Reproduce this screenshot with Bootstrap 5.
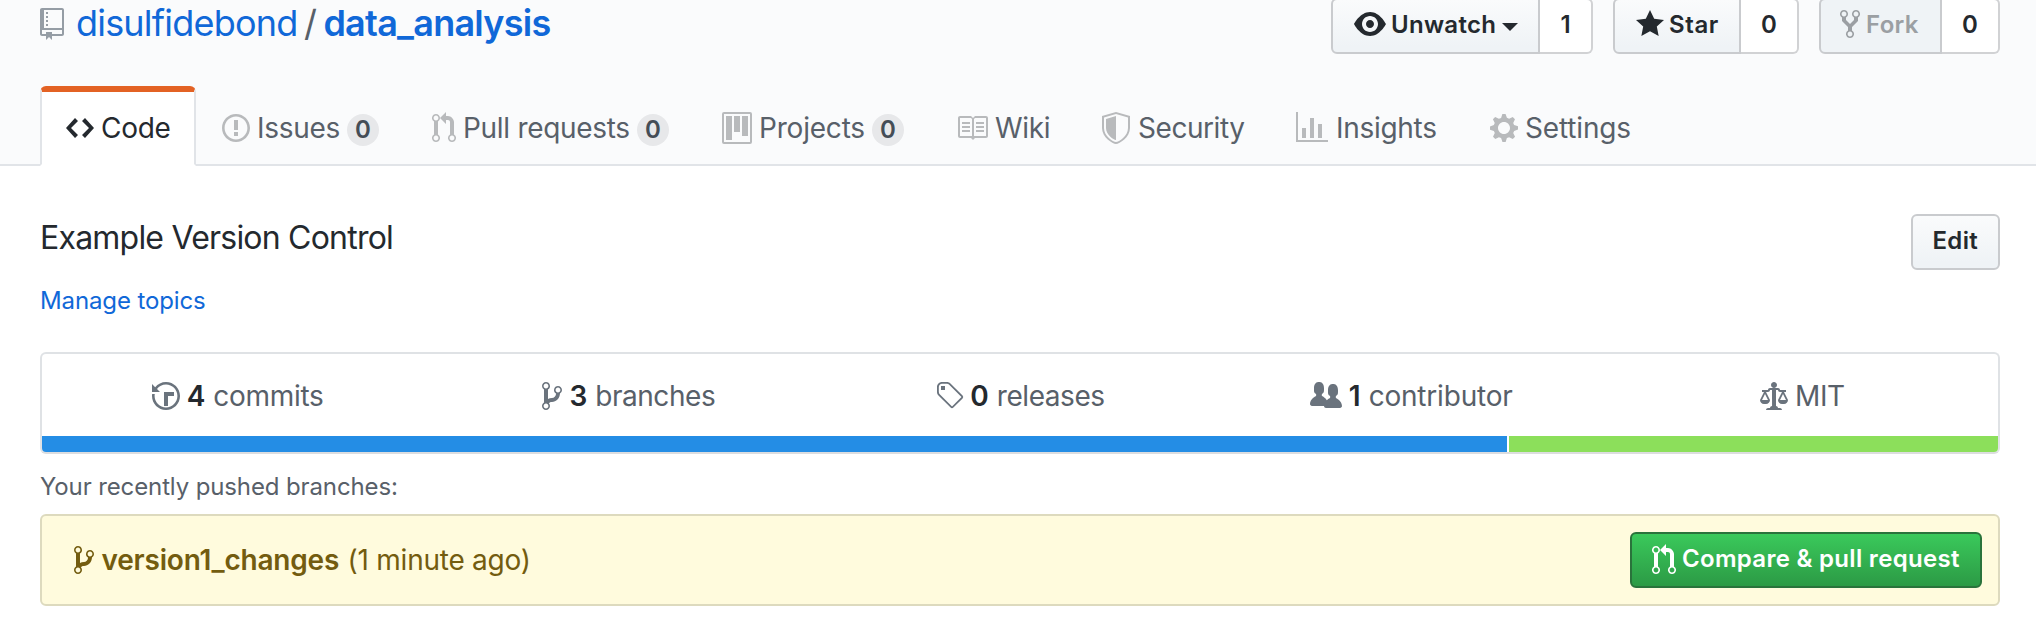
<!DOCTYPE html>
<html lang="en">
<head>
<meta charset="utf-8">
<meta name="viewport" content="width=device-width, initial-scale=1">
<title>disulfidebond/data_analysis</title>
<link href="https://cdn.jsdelivr.net/npm/bootstrap@5.3.0/dist/css/bootstrap.min.css" rel="stylesheet">
<style>
body{font-family:Inter,"Liberation Sans",sans-serif;font-size:28px;line-height:42px;color:#24292e;background:#fff}
a{text-decoration:none;color:#1068d8}
svg{fill:currentColor;height:32px;flex:none;display:block}
.b6{font-weight:600}
.fs24{font-size:24px;line-height:36px;letter-spacing:-.12px}
.gutter{padding-left:40px;padding-right:36px}
.repo-head{background:#fafbfc;height:166px;border-bottom:2px solid #e1e4e8}
.repo-title{font-size:36px;line-height:54px;height:54px;color:#586069;margin-top:-4px;gap:6.5px}
.repo-title svg{color:#959da5;margin:2px 5.5px 0 0}
.actions{gap:20px;margin-top:-2px}
.gh-btn{height:56px;font-size:24px;line-height:40px;font-weight:600;color:#24292e;border:2px solid #c9cbce;border-radius:6px;background:#eff3f6 linear-gradient(180deg,#fafbfc,#eff3f6 90%);padding:0 20px 2px;display:flex;align-items:center;gap:5px;white-space:nowrap}
.gh-btn svg{margin-bottom:2px}
.social .gh-btn{border-radius:6px 0 0 6px;padding-left:21px}
.social .gh-btn.off{background:#eff3f6;color:#9b9fa3;padding-left:19px;gap:6px}
.tally{height:56px;width:58px;border:2px solid #d1d2d4;border-left:0;border-radius:0 6px 6px 0;background:#fff;color:#24292e;font-size:24px;font-weight:600;line-height:50px;text-align:center}
.caret{border:8px solid transparent;border-top-color:currentColor;border-bottom:0;margin:3px 0 0 1px}
.w-watch{width:209px}.w-star{width:128px}.w-fork{width:123px}
.repo-tabs{height:80px;margin-bottom:-2px}
.repo-tab{height:80px;border:2px solid transparent;border-top-width:6px;padding:0 0 0 24px;color:#586069;display:flex;align-items:center;gap:7px;white-space:nowrap;letter-spacing:-.15px}
.repo-tab svg{color:#b8babc}
.repo-tab.on{background:#fff;color:#24292e;border-color:#e36224 #e1e4e8 transparent;border-radius:6px 6px 0 0}
.repo-tab.on svg{color:#24292e}
.pill{width:32px;height:32px;border-radius:16px;background:#e7e8ea;color:#444d56;font-size:24px;font-weight:600;line-height:32px;text-align:center;margin-top:4px}
.t-code{width:156px}.t-issues{width:210px}.t-pulls{width:290px}.t-projects{width:234px}.t-wiki{width:146px}.t-security{width:194px;gap:8px}.t-insights{width:194px;gap:8px}
.about{font-size:32px;line-height:48px;letter-spacing:-.78px}
.topics{margin-top:21px;margin-bottom:33px}
.stats{border:2px solid #dfe2e5;border-bottom-color:#dcdddf;border-radius:6px;height:102px;overflow:hidden}
.stats ul{height:82px;padding-top:2px}
.stats li{gap:7px;color:#586069;flex:1 1 0}
.stats b{color:#24292e;margin-right:1px}
.stats svg{color:#6a737d}
.langs{height:16px;gap:2px}
.lang-a{background:#248de5}.lang-b{background:#8cdf5b}
.pushed{margin:15px 0 9px;color:#586069}
.flash{background:#fffbdd;border:2px solid #dddabe;border-radius:6px;height:92px;color:#735c0f;padding:0 16px 0 32px}
.flash .branch{gap:7.5px}
.flash .branch span{letter-spacing:-.25px;margin-left:1px}
.gh-btn.go{color:#fff;border-color:#2a733b;background:linear-gradient(180deg,#3ac95b,#2c9a45);width:352px;gap:6px}
.gh-btn.go svg{margin:1px 0 0}
.ls-u{letter-spacing:.3px}.ls-f{letter-spacing:.6px}.ls-n{letter-spacing:-.3px}.ls-m{letter-spacing:-.2px}.ls-t{letter-spacing:-.45px}
.ls-own{letter-spacing:-.8px}.ls-repo{letter-spacing:-.75px}
</style>
</head>
<body>
<header class="repo-head gutter d-flex flex-column justify-content-between">
  <div class="d-flex justify-content-between align-items-start">
    <h1 class="repo-title d-flex align-items-center mb-0 fw-normal">
      <svg viewBox="0 0 12 16"><path d="M4 9H3V8h1v1zm0-3H3v1h1V6zm0-2H3v1h1V4zm0-2H3v1h1V2zm8-1v12c0 .55-.45 1-1 1H6v2l-1.5-1.5L3 16v-2H1c-.55 0-1-.45-1-1V1c0-.55.45-1 1-1h10c.55 0 1 .45 1 1zm-1 10H1v2h2v-1h3v1h5v-2zm0-10H2v9h9V1z"/></svg>
      <a href="#" class="ls-own">disulfidebond</a><span>/</span><a href="#" class="b6 ls-repo">data_analysis</a>
    </h1>
    <div class="actions d-flex">
      <div class="social d-flex">
        <a href="#" class="gh-btn w-watch"><svg viewBox="0 0 16 16"><path fill-rule="evenodd" d="M8.06 2C3 2 0 8 0 8s3 6 8.06 6C13 14 16 8 16 8s-3-6-7.94-6zM8 12c-2.2 0-4-1.78-4-4 0-2.2 1.8-4 4-4 2.22 0 4 1.8 4 4 0 2.22-1.78 4-4 4zm2-4c0 1.11-.89 2-2 2-1.11 0-2-.89-2-2 0-1.11.89-2 2-2 1.11 0 2 .89 2 2z"/></svg><span class="ls-u">Unwatch</span><i class="caret"></i></a>
        <a href="#" class="tally" style="width:53px">1</a>
      </div>
      <div class="social d-flex">
        <a href="#" class="gh-btn w-star"><svg viewBox="0 0 14 16"><path d="M14 6l-4.9-.64L7 1 4.9 5.36 0 6l3.6 3.26L2.67 14 7 11.67 11.33 14l-.93-4.74L14 6z"/></svg><span class="ls-f">Star</span></a>
        <a href="#" class="tally">0</a>
      </div>
      <div class="social d-flex">
        <span class="gh-btn off w-fork"><svg viewBox="0 0 10 16"><path fill-rule="evenodd" d="M8 1a1.993 1.993 0 0 0-1 3.72V6L5 8 3 6V4.72A1.993 1.993 0 0 0 2 1a1.993 1.993 0 0 0-1 3.72V6.5l3 3v1.78A1.993 1.993 0 0 0 5 15a1.993 1.993 0 0 0 1-3.72V9.5l3-3V4.72A1.993 1.993 0 0 0 8 1zM2 4.2C1.34 4.2.8 3.65.8 3c0-.65.55-1.2 1.2-1.2.65 0 1.2.55 1.2 1.2 0 .65-.55 1.2-1.2 1.2zm3 10c-.66 0-1.2-.55-1.2-1.2 0-.65.55-1.2 1.2-1.2.65 0 1.2.55 1.2 1.2 0 .65-.55 1.2-1.2 1.2zm3-10c-.66 0-1.2-.55-1.2-1.2 0-.65.55-1.2 1.2-1.2.65 0 1.2.55 1.2 1.2 0 .65-.55 1.2-1.2 1.2z"/></svg><span class="ls-u">Fork</span></span>
        <a href="#" class="tally">0</a>
      </div>
    </div>
  </div>
  <nav class="repo-tabs d-flex">
    <a href="#" class="repo-tab on t-code"><svg viewBox="0 0 14 16"><path d="M9.5 3L8 4.5 11.5 8 8 11.5 9.5 13 14 8 9.5 3zm-5 0L0 8l4.5 5L6 11.5 2.5 8 6 4.5 4.5 3z"/></svg><span class="ls-n">Code</span></a>
    <a href="#" class="repo-tab t-issues"><svg viewBox="0 0 14 16"><path fill-rule="evenodd" d="M7 2.3c3.14 0 5.7 2.56 5.7 5.7s-2.56 5.7-5.7 5.7A5.71 5.71 0 0 1 1.3 8c0-3.14 2.56-5.7 5.7-5.7zM7 1C3.14 1 0 4.14 0 8s3.14 7 7 7 7-3.14 7-7-3.14-7-7-7zm1 3H6v5h2V4zm0 6H6v2h2v-2z"/></svg><span class="ls-n">Issues</span><span class="pill">0</span></a>
    <a href="#" class="repo-tab t-pulls"><svg viewBox="0 0 12 16"><path fill-rule="evenodd" d="M11 11.28V5c-.03-.78-.34-1.47-.94-2.06C9.46 2.35 8.78 2.03 8 2H7V0L4 3l3 3V4h1c.27.02.48.11.69.31.21.2.3.42.31.69v6.28A1.993 1.993 0 0 0 10 15a1.993 1.993 0 0 0 1-3.72zm-1 2.92c-.66 0-1.2-.55-1.2-1.2 0-.65.55-1.2 1.2-1.2.65 0 1.2.55 1.2 1.2 0 .65-.55 1.2-1.2 1.2zM4 3c0-1.11-.89-2-2-2a1.993 1.993 0 0 0-1 3.72v6.56A1.993 1.993 0 0 0 2 15a1.993 1.993 0 0 0 1-3.72V4.72c.59-.34 1-.98 1-1.72zm-.8 10c0 .66-.55 1.2-1.2 1.2-.65 0-1.2-.55-1.2-1.2 0-.65.55-1.2 1.2-1.2.65 0 1.2.55 1.2 1.2zM2 4.2C1.34 4.2.8 3.65.8 3c0-.65.55-1.2 1.2-1.2.65 0 1.2.55 1.2 1.2 0 .65-.55 1.2-1.2 1.2z"/></svg><span class="ls-n">Pull requests</span><span class="pill">0</span></a>
    <a href="#" class="repo-tab t-projects"><svg viewBox="0 0 15 16"><path fill-rule="evenodd" d="M10 12h3V2h-3v10zm-4-2h3V2H6v8zm-4 4h3V2H2v12zm-1 1h13V1H1v14zM14 0H1a1 1 0 0 0-1 1v14a1 1 0 0 0 1 1h13a1 1 0 0 0 1-1V1a1 1 0 0 0-1-1z"/></svg><span class="ls-m">Projects</span><span class="pill">0</span></a>
    <a href="#" class="repo-tab t-wiki"><svg viewBox="0 0 16 16"><path fill-rule="evenodd" d="M3 5h4v1H3V5zm0 3h4V7H3v1zm0 2h4V9H3v1zm11-5h-4v1h4V5zm0 2h-4v1h4V7zm0 2h-4v1h4V9zm2-6v9c0 .55-.45 1-1 1H9.5l-1 1-1-1H2c-.55 0-1-.45-1-1V3c0-.55.45-1 1-1h5.5l1 1 1-1H15c.55 0 1 .45 1 1zm-8 .5L7.5 3H2v9h6V3.5zm7-.5H9.5l-.5.5V12h6V3z"/></svg><span class="ls-n">Wiki</span></a>
    <a href="#" class="repo-tab t-security"><svg viewBox="0 0 14 16"><path fill-rule="evenodd" d="M0 2l7-2 7 2v6.02C14 12.69 8.69 16 7 16c-1.69 0-7-3.31-7-7.98V2zm1 .75L7 1l6 1.75v5.268C13 12.104 8.449 15 7 15c-1.449 0-6-2.896-6-6.982V2.75zm1 .75L7 2v12c-1.207 0-5-2.482-5-5.985V3.5z"/></svg><span class="ls-t">Security</span></a>
    <a href="#" class="repo-tab t-insights"><svg viewBox="0 0 16 16"><path d="M16 14v1H0V0h1v14h15zM5 13H3V8h2v5zm4 0H7V3h2v10zm4 0h-2V6h2v7z"/></svg><span class="ls-n">Insights</span></a>
    <a href="#" class="repo-tab"><svg viewBox="0 0 14 16"><path fill-rule="evenodd" d="M14 8.77v-1.6l-1.94-.64-.45-1.09.88-1.84-1.13-1.13-1.81.91-1.09-.45-.69-1.92h-1.6l-.63 1.94-1.11.45-1.84-.88-1.13 1.13.91 1.81-.45 1.09L0 7.23v1.59l1.94.64.45 1.09-.88 1.84 1.13 1.13 1.81-.91 1.09.45.69 1.92h1.59l.63-1.94 1.11-.45 1.84.88 1.13-1.13-.92-1.81.47-1.09L14 8.75v.02zM7 11c-1.66 0-3-1.34-3-3s1.34-3 3-3 3 1.34 3 3-1.34 3-3 3z"/></svg><span>Settings</span></a>
  </nav>
</header>

<main class="gutter pt-5">
  <div class="d-flex justify-content-between align-items-start">
    <div>
      <div class="about">Example Version Control</div>
      <div class="topics fs24"><a href="#">Manage topics</a></div>
    </div>
    <a href="#" class="gh-btn ls-u">Edit</a>
  </div>

  <section class="stats">
    <ul class="list-unstyled d-flex mb-0">
      <li class="d-flex align-items-center justify-content-center"><svg viewBox="0 0 14 16"><path d="M8 13H6V6h5v2H8v5zM7 1C4.81 1 2.87 2.02 1.59 3.59L0 2v4h4L2.5 4.5C3.55 3.17 5.17 2.3 7 2.3c3.14 0 5.7 2.56 5.7 5.7s-2.56 5.7-5.7 5.7A5.71 5.71 0 0 1 1.3 8c0-.34.03-.67.09-1H.08C.03 7.33 0 7.66 0 8c0 3.86 3.14 7 7 7s7-3.14 7-7-3.14-7-7-7z"/></svg><b class="b6">4</b><span class="ls-n">commits</span></li>
      <li class="d-flex align-items-center justify-content-center"><svg viewBox="0 0 10 16"><path id="branch" fill-rule="evenodd" d="M10 5c0-1.11-.89-2-2-2a1.993 1.993 0 0 0-1 3.72v.3c-.02.52-.23.98-.63 1.38-.4.4-.86.61-1.38.63-.83.02-1.48.16-2 .45V4.72a1.993 1.993 0 0 0-1-3.72C.88 1 0 1.89 0 3a2 2 0 0 0 1 1.72v6.56c-.59.35-1 .99-1 1.72 0 1.11.89 2 2 2 1.11 0 2-.89 2-2 0-.53-.2-1-.53-1.36.09-.06.48-.41.59-.47.25-.11.56-.17.94-.17 1.05-.05 1.95-.45 2.75-1.25S8.95 7.77 9 6.73h-.02C9.59 6.37 10 5.73 10 5zM2 1.8c.66 0 1.2.55 1.2 1.2 0 .65-.55 1.2-1.2 1.2C1.35 4.2.8 3.65.8 3c0-.65.55-1.2 1.2-1.2zm0 12.41c-.66 0-1.2-.55-1.2-1.2 0-.65.55-1.2 1.2-1.2.65 0 1.2.55 1.2 1.2 0 .65-.55 1.2-1.2 1.2zm6-8c-.66 0-1.2-.55-1.2-1.2 0-.65.55-1.2 1.2-1.2.65 0 1.2.55 1.2 1.2 0 .65-.55 1.2-1.2 1.2z"/></svg><b class="b6">3</b><span class="ls-t">branches</span></li>
      <li class="d-flex align-items-center justify-content-center"><svg viewBox="0 0 14 16" style="overflow:visible"><path fill-rule="evenodd" d="M7.73 1.73C7.26 1.26 6.62 1 5.96 1H3.5C2.13 1 1 2.13 1 3.5v2.47c0 .66.27 1.3.73 1.77l6.06 6.06c.39.39 1.02.39 1.41 0l4.59-4.59a.996.996 0 0 0 0-1.41L7.73 1.73zM2.38 7.09c-.31-.3-.47-.7-.47-1.13V3.5c0-.88.72-1.59 1.59-1.59h2.47c.42 0 .83.16 1.13.47l6.14 6.13-4.73 4.73-6.13-6.15zM3.01 3h2v2H3V3h.01z"/></svg><b class="b6">0</b><span class="ls-t">releases</span></li>
      <li class="d-flex align-items-center justify-content-center"><svg viewBox="0 0 16 16"><path d="M16 12.999c0 .439-.45 1-1 1H7.995c-.539 0-.994-.447-.995-.999H1c-.54 0-1-.561-1-1 0-2.634 3-4 3-4s.229-.409 0-1c-.841-.621-1.058-.59-1-3 .058-2.419 1.367-3 2.5-3s2.442.58 2.5 3c.058 2.41-.159 2.379-1 3-.229.59 0 1 0 1s1.549.711 2.42 2.088C9.196 9.369 10 8.999 10 8.999s.229-.409 0-1c-.841-.62-1.058-.59-1-3 .058-2.419 1.367-3 2.5-3s2.437.581 2.495 3c.059 2.41-.158 2.38-1 3-.229.59 0 1 0 1s3.005 1.366 3.005 4z"/></svg><b class="b6">1</b><span class="ls-m">contributor</span></li>
      <li class="d-flex align-items-center justify-content-center"><svg viewBox="0 0 14 16"><path fill-rule="evenodd" d="M7 4c-.83 0-1.5-.67-1.5-1.5S6.17 1 7 1s1.5.67 1.5 1.5S7.83 4 7 4zm7 6c0 1.11-.89 2-2 2h-1c-1.11 0-2-.89-2-2l2-4h-1c-.55 0-1-.45-1-1H8v8c.42 0 1 .45 1 1h1c.42 0 1 .45 1 1H3c0-.55.58-1 1-1h1c0-.55.58-1 1-1h.03L6 5H5c0 .55-.45 1-1 1H3l2 4c0 1.11-.89 2-2 2H2c-1.11 0-2-.89-2-2l2-4H1V5h3c0-.55.45-1 1-1h4c.55 0 1 .45 1 1h3v1h-1l2 4zM2.5 7L1 10h3L2.5 7zM13 10l-1.5-3-1.5 3h3z"/></svg><span class="ls-n">MIT</span></li>
    </ul>
    <div class="langs d-flex"><span class="lang-a" style="width:74.9%"></span><span class="lang-b flex-grow-1"></span></div>
  </section>

  <p class="pushed fs24">Your recently pushed branches:</p>
  <section class="flash d-flex align-items-center justify-content-between">
    <div class="branch d-flex align-items-center"><svg viewBox="0 0 10 16"><use href="#branch"/></svg><b class="b6 ls-m">version1_changes</b><span>(1 minute ago)</span></div>
    <a href="#" class="gh-btn go"><svg viewBox="0 0 12 16"><path fill-rule="evenodd" d="M11 11.28V5c-.03-.78-.34-1.47-.94-2.06C9.46 2.35 8.78 2.03 8 2H7V0L4 3l3 3V4h1c.27.02.48.11.69.31.21.2.3.42.31.69v6.28A1.993 1.993 0 0 0 10 15a1.993 1.993 0 0 0 1-3.72zm-1 2.92c-.66 0-1.2-.55-1.2-1.2 0-.65.55-1.2 1.2-1.2.65 0 1.2.55 1.2 1.2 0 .65-.55 1.2-1.2 1.2zM4 3c0-1.11-.89-2-2-2a1.993 1.993 0 0 0-1 3.72v6.56A1.993 1.993 0 0 0 2 15a1.993 1.993 0 0 0 1-3.72V4.72c.59-.34 1-.98 1-1.72zm-.8 10c0 .66-.55 1.2-1.2 1.2-.65 0-1.2-.55-1.2-1.2 0-.65.55-1.2 1.2-1.2.65 0 1.2.55 1.2 1.2zM2 4.2C1.34 4.2.8 3.65.8 3c0-.65.55-1.2 1.2-1.2.65 0 1.2.55 1.2 1.2 0 .65-.55 1.2-1.2 1.2z"/></svg><span class="ls-u">Compare &amp; pull request</span></a>
  </section>
</main>
<script src="https://cdn.jsdelivr.net/npm/bootstrap@5.3.0/dist/js/bootstrap.bundle.min.js"></script>
</body>
</html>
